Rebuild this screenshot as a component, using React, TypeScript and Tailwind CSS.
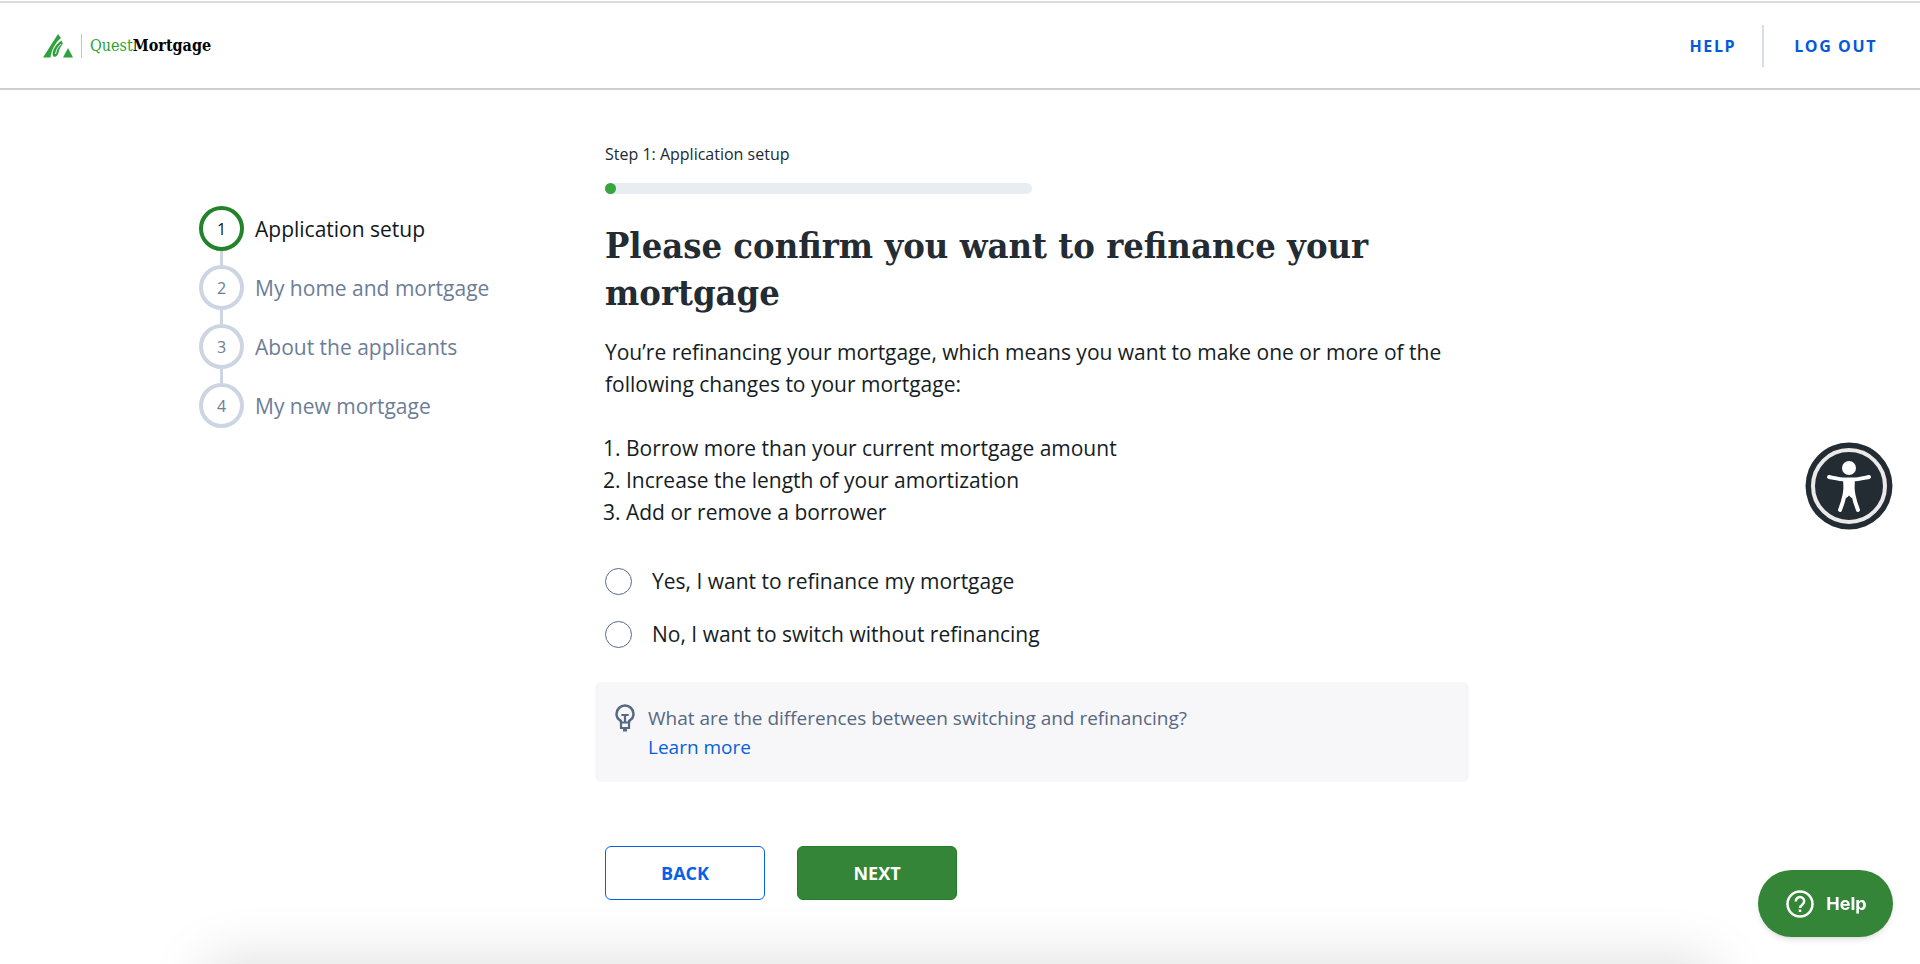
import { useState } from "react";
import clsx from "clsx";

const steps = [
  "Application setup",
  "My home and mortgage",
  "About the applicants",
  "My new mortgage",
];

const changes = [
  "Borrow more than your current mortgage amount",
  "Increase the length of your amortization",
  "Add or remove a borrower",
];

const options = [
  { value: "refinance", label: "Yes, I want to refinance my mortgage" },
  { value: "switch", label: "No, I want to switch without refinancing" },
];

function Logo() {
  return (
    <a href="#" className="flex items-center gap-2">
      <svg viewBox="0 0 30 24" className="h-6 w-[30px]" fill="#2fa23c" aria-hidden="true">
        <path d="M15 0 L18 4 C12 9 8.500 16 7.500 23.500 H0 Z" />
        <path d="M18.500 6.500 L19.800 9.500 C18.500 12 16.500 14 15.500 19 C14.500 22 12.500 23.500 10.500 22.500 C8 20 11 11 18.500 6.500 Z" />
        <path d="M18 10 C15 13 13.500 15 12.500 20" fill="none" stroke="#fff" strokeWidth="0.900" />
        <path d="M25 14 L30 23.500 H20 Z" />
      </svg>
      <span className="h-6 w-px bg-[#a9d8ae]" />
      <span className="font-['Roboto_Slab','DejaVu_Serif_Condensed','DejaVu_Serif',serif] text-base font-bold">
        <span className="font-normal text-[#2aa52f]">Quest</span>
        <span className="text-black">Mortgage</span>
      </span>
    </a>
  );
}

function Header() {
  return (
    <header className="mt-px flex h-[89px] items-center justify-between border-y-2 border-t-[#dcdcdc] border-b-[#cfcfcf] px-[43px]">
      <Logo />
      <nav className="flex items-center text-base font-bold tracking-widest text-[#0259da]">
        <a href="#" className="pr-6.5">HELP</a>
        <a href="#" className="flex h-[42px] items-center border-l-2 border-[#d8dde9] pl-7.5">LOG OUT</a>
      </nav>
    </header>
  );
}

function Stepper({ current }: { current: number }) {
  return (
    <ol className="mt-16 w-[406px] shrink-0">
      {steps.map((step, i) => (
        <li key={step}>
          {i > 0 && <div className="ml-[21px] h-[14px] w-[3px] bg-[#cdd5e3]" />}
          <div
            className={clsx(
              "flex items-center gap-[11px] text-[21px] leading-8",
              i === current ? "text-[#101820]" : "text-[#6c7d98]"
            )}
          >
            <span
              className={clsx(
                "flex size-[45px] items-center justify-center rounded-full border-4 text-base",
                i === current ? "border-[#23832b]" : "border-[#cdd5e3]"
              )}
            >
              {i + 1}
            </span>
            {step}
          </div>
        </li>
      ))}
    </ol>
  );
}

function BulbIcon() {
  return (
    <svg viewBox="0 0 20 28" className="h-7 w-5 shrink-0" fill="none" stroke="#566882" strokeWidth="2.500" aria-hidden="true">
      <path d="M5.800 18.500 V16.800 C3 15.200 1.500 13 1.500 10 A8.500 8.500 0 0 1 18.500 10 C18.500 13 17 15.200 14.200 16.800 V18.500" />
      <path d="M6.300 11 H13.700 M10 11 V18" strokeWidth="2.200" />
      <path d="M6 18.500 H14 V24 H6 Z" strokeWidth="2.200" />
      <path d="M8 25 H12 V27.500 H8 Z" fill="#566882" stroke="none" />
    </svg>
  );
}

function RefinanceForm() {
  const [choice, setChoice] = useState("");

  return (
    <form className="max-w-[864px] flex-1" onSubmit={(e) => e.preventDefault()}>
      <p className="text-base leading-6 text-[#202a33]">Step 1: Application setup</p>
      <div className="mt-[17px] h-[11px] w-[427px] rounded-full bg-[#e8edf2]">
        <div className="size-[11px] rounded-full bg-[#38a33f]" />
      </div>
      <h1 className="mt-7 font-['Roboto_Slab','DejaVu_Serif_Condensed','DejaVu_Serif',serif] text-4xl leading-[47px] font-bold text-[#232b33]">
        Please confirm you want to refinance your mortgage
      </h1>
      <div className="mt-5 text-[21px] leading-8 text-[#151d24]">
        <p>
          You’re refinancing your mortgage, which means you want to make one or more of the
          following changes to your mortgage:
        </p>
        <ol className="mt-8 -ml-0.5 list-inside list-decimal">
          {changes.map((change) => (
            <li key={change}>{change}</li>
          ))}
        </ol>
      </div>
      <fieldset className="mt-[37px] flex flex-col gap-[21px] text-[21px] leading-8 text-[#151d24]">
        {options.map(({ value, label }) => (
          <label key={value} className="flex items-center gap-5">
            <input
              type="radio"
              name="choice"
              value={value}
              checked={choice === value}
              onChange={() => setChoice(value)}
              className="size-[27px] appearance-none rounded-full border border-[#566a90] bg-white checked:border-8"
            />
            {label}
          </label>
        ))}
      </fieldset>
      <aside className="mt-8 -ml-[10px] flex h-[100px] gap-[13px] rounded-md bg-[#f7f7fa] px-5 py-[22px] text-[19px] leading-[29px]">
        <BulbIcon />
        <div>
          <p className="text-[#566882]">
            What are the differences between switching and refinancing?
          </p>
          <a href="#" className="text-[#0760dc]">Learn more</a>
        </div>
      </aside>
      <div className="mt-16 flex gap-8 text-lg font-bold">
        <button type="button" className="h-[54px] w-40 rounded-md border border-[#0760e6] text-[#0760e6]">
          BACK
        </button>
        <button type="submit" className="h-[54px] w-40 rounded-md border border-[#23802a] bg-[#348537] text-white">
          NEXT
        </button>
      </div>
    </form>
  );
}

function AccessibilityButton() {
  return (
    <button type="button" aria-label="Accessibility options" className="fixed top-[442px] right-[27px] size-[88px]">
      <svg viewBox="0 0 88 88" className="size-full" aria-hidden="true">
        <circle cx="44" cy="44" r="43.500" fill="#242c33" />
        <circle cx="44" cy="44" r="36" fill="none" stroke="#ebe9e9" strokeWidth="4" />
        <circle cx="44" cy="26" r="7" fill="#fff" />
        <path
          d="M24 35 C34 37 36 37.500 40 37.500 H48 C52 37.500 54 37 64 35 M41 39 C41 50 39 58 35 68 M47 39 C47 50 49 58 53 68"
          fill="none"
          stroke="#fff"
          strokeWidth="4"
          strokeLinecap="round"
          strokeLinejoin="round"
        />
        <path d="M38 37 H50 L49 52 L46.500 56 L44 53.500 L41.500 56 L39 52 Z" fill="#fff" />
      </svg>
    </button>
  );
}

function HelpButton() {
  return (
    <button
      type="button"
      className="fixed right-[27px] bottom-[27px] flex h-[67px] w-[135px] items-center justify-center gap-3 rounded-full bg-[#348537] pl-0.5 font-['Inter',sans-serif] text-lg font-bold text-white shadow-md"
    >
      <svg viewBox="0 0 28 28" className="size-7" fill="none" stroke="currentColor" strokeWidth="2.500" aria-hidden="true">
        <circle cx="14" cy="14" r="12.500" />
        <path d="M9.800 11.500 A4.200 4.200 0 1 1 16.500 14.500 C14.800 15.800 14 16.500 14 18" />
        <path d="M14 19.500 V22" />
      </svg>
      Help
    </button>
  );
}

export default function App() {
  return (
    <div className="flow-root min-h-screen overflow-hidden bg-white font-['Open_Sans','Noto_Sans',sans-serif]">
      <Header />
      <main className="flex pt-[52px] pr-8 pl-[199px]">
        <Stepper current={0} />
        <RefinanceForm />
      </main>
      <div className="fixed inset-x-[208px] -bottom-20 h-20 shadow-[0_0_60px_0_rgba(0,0,0,0.15)]" />
      <AccessibilityButton />
      <HelpButton />
    </div>
  );
}
